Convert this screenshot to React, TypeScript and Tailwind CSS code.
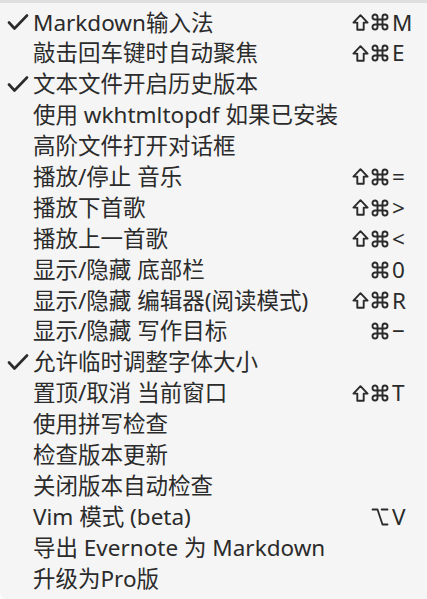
import React from "react";
import { Command, Option } from "lucide-react";

type Item = {
  label: string;
  checked?: boolean;
  shift?: boolean;
  cmd?: boolean;
  opt?: boolean;
  keyChar?: string;
};

const ITEMS: Item[] = [
  { label: "Markdown输入法", checked: true, shift: true, cmd: true, keyChar: "M" },
  { label: "敲击回车键时自动聚焦", shift: true, cmd: true, keyChar: "E" },
  { label: "文本文件开启历史版本", checked: true },
  { label: "使用 wkhtmltopdf 如果已安装" },
  { label: "高阶文件打开对话框" },
  { label: "播放/停止 音乐", shift: true, cmd: true, keyChar: "=" },
  { label: "播放下首歌", shift: true, cmd: true, keyChar: ">" },
  { label: "播放上一首歌", shift: true, cmd: true, keyChar: "<" },
  { label: "显示/隐藏 底部栏", cmd: true, keyChar: "0" },
  { label: "显示/隐藏 编辑器(阅读模式)", shift: true, cmd: true, keyChar: "R" },
  { label: "显示/隐藏 写作目标", cmd: true, keyChar: "−" },
  { label: "允许临时调整字体大小", checked: true },
  { label: "置顶/取消 当前窗口", shift: true, cmd: true, keyChar: "T" },
  { label: "使用拼写检查" },
  { label: "检查版本更新" },
  { label: "关闭版本自动检查" },
  { label: "Vim 模式 (beta)", opt: true, keyChar: "V" },
  { label: "导出 Evernote 为 Markdown" },
  { label: "升级为Pro版" },
];

function Check() {
  return (
    <svg width="22" height="16" viewBox="0 0 22 16" className="ml-[7px]">
      <path d="M2 8.5 L7.5 14.5 L20 1.5" fill="none" stroke="#2b2b2b" strokeWidth="2.6" strokeLinecap="round" strokeLinejoin="round" />
    </svg>
  );
}

// outlined up arrow (shift key)
function Shift() {
  return (
    <svg width="17" height="17" viewBox="0 0 17 17">
      <path d="M8.5 1.2 L15.6 8.6 L11.7 8.6 L11.7 15.8 L5.3 15.8 L5.3 8.6 L1.4 8.6 Z" fill="none" stroke="#2b2b2b" strokeWidth="1.9" strokeLinejoin="round" />
    </svg>
  );
}

function Row({ item }: { item: Item }) {
  return (
    <div className="flex h-[30.9px] items-center">
      <div className="flex w-[33px] shrink-0 items-center">{item.checked && <Check />}</div>
      <div className="flex-1 whitespace-nowrap">{item.label}</div>
      {item.keyChar && (
        <div className="flex items-center">
          <div className="flex items-center gap-[1px]">
            {item.shift && <Shift />}
            {item.cmd && <Command size={20} strokeWidth={2.3} />}
            {item.opt && <Option size={20} strokeWidth={2.2} />}
          </div>
          <span className="w-[37px] pl-[2px]">{item.keyChar}</span>
        </div>
      )}
    </div>
  );
}

export default function App() {
  return (
    <div className="h-[599px] w-[427px] overflow-hidden rounded-bl-[6px] bg-[#f5f5f5] font-['Noto_Sans','Noto_Sans_CJK_SC',sans-serif] text-[22.5px] text-[#2b2b2b]">
      <div className="h-[3px] bg-[#dfdfdf]" />
      <div className="pt-[4px]">
        {ITEMS.map((it) => (
          <Row key={it.label} item={it} />
        ))}
      </div>
    </div>
  );
}
